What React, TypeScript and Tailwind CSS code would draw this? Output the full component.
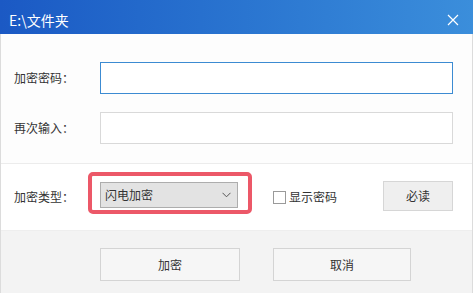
import React from "react";

const font = { fontFamily: '"Noto Sans CJK SC", "Noto Sans", sans-serif' };

export default function App() {
  return (
    <div className="w-[473px] h-[293px] flex flex-col overflow-hidden bg-white text-[12px] text-[#333]" style={font}>
      {/* Title bar */}
      <div className="h-[34px] shrink-0 flex items-center justify-between pl-[9px] pr-[14px] pt-[6px] bg-gradient-to-r from-[#1b59c4] to-[#3b8edb] text-white">
        <span className="text-[14px] leading-none">E:\文件夹</span>
        <svg width="12" height="12" viewBox="0 0 12 12" className="mt-[-1px]">
          <path d="M1 1 L11 11 M11 1 L1 11" stroke="white" strokeWidth="1.2" fill="none" />
        </svg>
      </div>

      <div className="flex-1 flex flex-col border-x border-[#dcdcdc]">
        {/* Password section */}
        <div className="h-[130px] shrink-0 flex flex-col gap-[18px] pt-[28px] pr-[19px] border-b border-[#ececec] bg-[#fdfdfd]">
          <div className="flex items-center">
            <span className="w-[99px] shrink-0 pl-[13px]">加密密码：</span>
            <input className="flex-1 min-w-0 h-[32px] border border-[#3c8bd2] bg-white outline-none" />
          </div>
          <div className="flex items-center">
            <span className="w-[99px] shrink-0 pl-[13px]">再次输入：</span>
            <input className="flex-1 min-w-0 h-[32px] border border-[#d9d9d9] bg-white outline-none" />
          </div>
        </div>

        {/* Options row */}
        <div className="h-[66px] shrink-0 flex items-center bg-white">
          <span className="w-[87px] shrink-0 pl-[13px]">加密类型：</span>
          <div className="mb-[8px] border-[4px] border-[#ec5868] rounded-[5px] pl-[8px] pr-[10px] pt-[6px] pb-[2px]">
            <div className="w-[138px] h-[26px] flex items-center justify-between pl-[4px] pr-[6px] bg-[#e3e3e3] border border-[#adadad]">
              <span>闪电加密</span>
              <svg width="9" height="6" viewBox="0 0 9 6">
                <path d="M0.5 0.8 L4.5 4.8 L8.5 0.8" stroke="#555" strokeWidth="1" fill="none" />
              </svg>
            </div>
          </div>
          <div className="flex items-center ml-[21px]">
            <span className="w-[13px] h-[13px] border border-[#9a9a9a] bg-white" />
            <span className="ml-[3px]">显示密码</span>
          </div>
          <button className="ml-auto mr-[19px] mb-[2px] w-[70px] h-[30px] bg-[#efefef] border border-[#d6d6d6] text-[#333]">必读</button>
        </div>

        {/* Footer */}
        <div className="flex-1 flex items-start gap-[33px] pt-[17px] pl-[99px] bg-[#f3f3f3] border-t border-[#eeeeee]">
          <button className="w-[140px] h-[33px] bg-[#f6f6f6] border border-[#d4d4d4] text-[#333]">加密</button>
          <button className="w-[138px] h-[33px] bg-[#f6f6f6] border border-[#d4d4d4] text-[#333]">取消</button>
        </div>
      </div>
    </div>
  );
}
